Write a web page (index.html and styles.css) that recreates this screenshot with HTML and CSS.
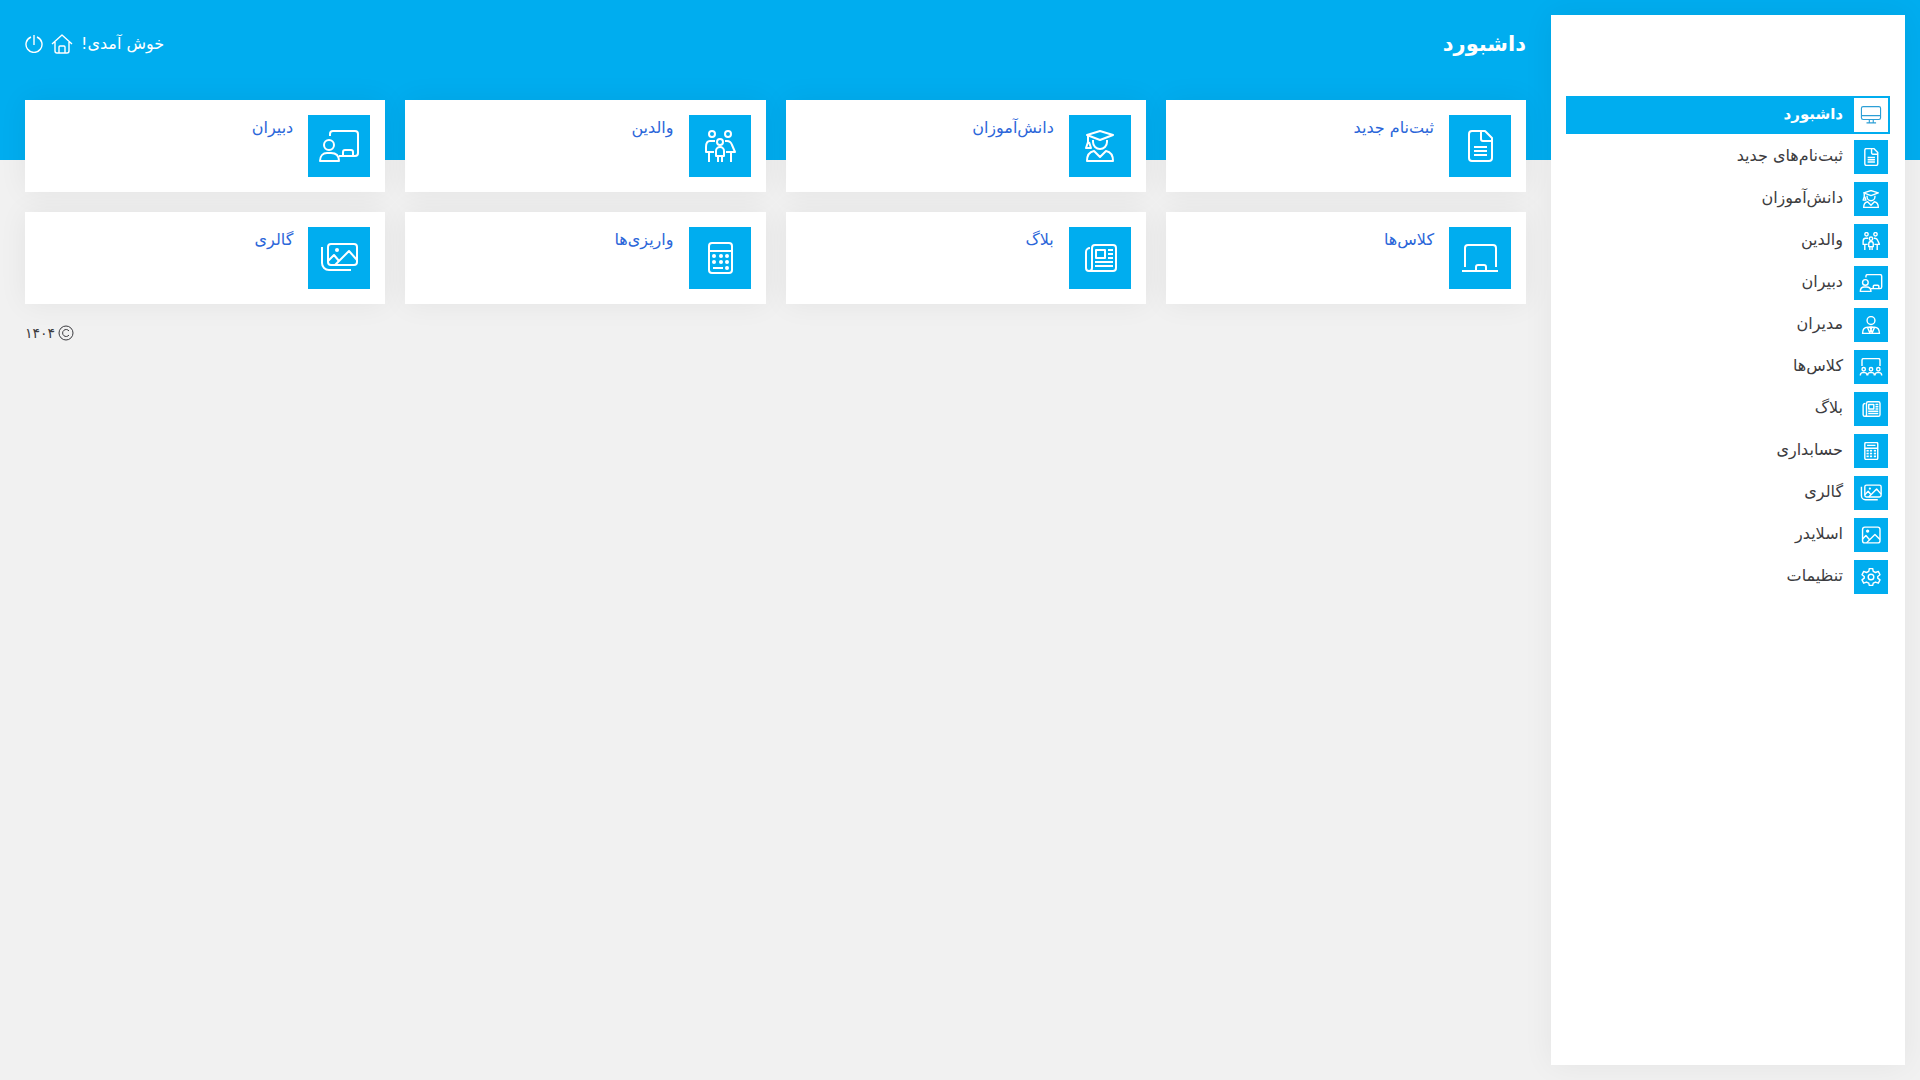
FILE: index.html
```html
<!DOCTYPE html>
<html lang="fa" dir="rtl">
<head>
    <meta charset="UTF-8">
    <meta name="viewport" content="width=device-width, initial-scale=1.0">
    <title>داشبورد</title>
    <link rel="stylesheet" href="styles.css">
</head>
<body>
    <!-- Icon sprite -->
    <svg class="sprite" aria-hidden="true">
        <symbol id="i-monitor" viewBox="0 0 40 32">
            <rect x="3" y="1" width="34" height="23" rx="3"/>
            <path d="M3 17h34M17 24v6M24 24v6M12 30h17"/>
        </symbol>
        <symbol id="i-file" viewBox="0 0 40 32">
            <path d="M12 1h13l7 7v20a3 3 0 0 1-3 3H12a3 3 0 0 1-3-3V4a3 3 0 0 1 3-3z"/>
            <path d="M21 1v8a2 2 0 0 0 2 2h9M14 17h13M14 21h13M14 25h13"/>
        </symbol>
        <symbol id="i-student" viewBox="0 0 40 32">
            <path d="M7 5l13-4 13 4-13 5z"/>
            <path d="M8 6v6l-2 6h5l-2-6M13 10v2a7 7 0 0 0 14 0v-2"/>
            <path d="M7 31c0-6 2-9 7-10l6 6 6-6c5 1 7 4 7 10z"/>
        </symbol>
        <symbol id="i-family" viewBox="0 0 40 32">
            <circle cx="12" cy="4" r="3"/>
            <circle cx="28" cy="4" r="3"/>
            <circle cx="20" cy="12" r="3"/>
            <path d="M15 11h-5c-3 0-4 3-4 6v5h3v10M9 22h5M25 11h2c3 0 4 1 5 4l3 7h-4v10M31 22h-5"/>
            <path d="M18 32v-6h-2v-5a4 4 0 0 1 8 0v5h-2v6M16 26h8"/>
        </symbol>
        <symbol id="i-teacher" viewBox="0 0 40 32">
            <path d="M11 6V4a3 3 0 0 1 3-3h22a3 3 0 0 1 3 3v19a3 3 0 0 1-3 3H20"/>
            <path d="M24 26v-4a2 2 0 0 1 2-2h6a2 2 0 0 1 2 2v4"/>
            <circle cx="10" cy="15" r="5"/>
            <path d="M1 31c0-5 3-8 7-8h4c5 0 8 3 8 8z"/>
        </symbol>
        <symbol id="i-admin" viewBox="0 0 40 32">
            <circle cx="20" cy="8" r="7"/>
            <path d="M5 31c0-6 3-11 9-11h12c6 0 9 5 9 11z"/>
            <path d="M14 21l4 9 2-6 2 6 4-9M18 20h4l-2 4z"/>
        </symbol>
        <symbol id="i-classroom" viewBox="0 0 40 32">
            <path d="M4 14V4a3 3 0 0 1 3-3h26a3 3 0 0 1 3 3v10"/>
            <circle cx="7" cy="20" r="3"/>
            <circle cx="20" cy="20" r="3"/>
            <circle cx="33" cy="20" r="3"/>
            <path d="M1 31c0-3 2-5 4-5h4c2 0 4 2 4 5M14 31c0-3 2-5 4-5h4c2 0 4 2 4 5M27 31c0-3 2-5 4-5h4c2 0 4 2 4 5"/>
        </symbol>
        <symbol id="i-board" viewBox="0 0 40 32">
            <path d="M5 25V6a3 3 0 0 1 3-3h25a3 3 0 0 1 3 3v19M2 29h36"/>
            <path d="M16 29v-4a2 2 0 0 1 2-2h6a2 2 0 0 1 2 2v4"/>
        </symbol>
        <symbol id="i-news" viewBox="0 0 40 32">
            <path d="M10 6a4 4 0 0 0-4 4v16a3 3 0 0 0 6 0V6a3 3 0 0 1 3-3h18a3 3 0 0 1 3 3v20a3 3 0 0 1-3 3H9"/>
            <rect x="16" y="8" width="9" height="8"/>
            <path d="M28 8h5M28 12h5M28 16h5M15 20h18M15 24h18"/>
        </symbol>
        <symbol id="i-calc" viewBox="0 0 40 32">
            <rect x="9" y="1" width="23" height="30" rx="3"/>
            <path d="M9 9h23M13 26h10"/>
            <g class="dots">
                <circle cx="14" cy="14" r="2"/>
                <circle cx="21" cy="14" r="2"/>
                <circle cx="27" cy="14" r="2"/>
                <circle cx="14" cy="20" r="2"/>
                <circle cx="21" cy="20" r="2"/>
                <circle cx="27" cy="20" r="2"/>
                <circle cx="27" cy="26" r="2"/>
            </g>
        </symbol>
        <symbol id="i-accounting" viewBox="0 0 40 32">
            <rect x="9" y="1" width="23" height="30" rx="2"/>
            <path d="M13 6h15M9 11h23"/>
            <g class="dots">
                <rect x="12" y="14" width="4" height="3"/>
                <rect x="18" y="14" width="4" height="3"/>
                <rect x="25" y="14" width="4" height="3"/>
                <rect x="12" y="19" width="4" height="3"/>
                <rect x="18" y="19" width="4" height="3"/>
                <rect x="25" y="19" width="4" height="3"/>
                <rect x="12" y="24" width="4" height="3"/>
                <rect x="18" y="24" width="4" height="3"/>
                <rect x="25" y="24" width="4" height="3"/>
            </g>
        </symbol>
        <symbol id="i-images" viewBox="0 0 40 32">
            <rect x="9" y="2" width="29" height="21" rx="3"/>
            <path d="M3 5v16a7 7 0 0 0 7 7h22M9 19l6-6 5 6M16 23l14-14 8 9"/>
            <circle class="dots" cx="18" cy="8" r="2"/>
        </symbol>
        <symbol id="i-image" viewBox="0 0 40 32">
            <rect x="5" y="2" width="31" height="28" rx="4"/>
            <path d="M5 23l6-6 6 7M12 30l15-15 9 9"/>
            <circle class="dots" cx="14" cy="9" r="3"/>
        </symbol>
        <symbol id="i-gear" viewBox="0 0 40 32">
            <path d="M17 1h6l1 5 4 2 5-2 3 6-4 3v3l4 3-3 6-5-2-4 2-1 4h-6l-1-4-4-2-5 2-3-6 4-3v-3l-4-3 3-6 5 2 4-2z"/>
            <circle cx="20" cy="16" r="5"/>
        </symbol>
        <symbol id="i-home" viewBox="0 0 22 20">
            <path d="M1 10l10-9 10 9M4 8v9a2 2 0 0 0 2 2h10a2 2 0 0 0 2-2V8M8 19v-6a1 1 0 0 1 1-1h4a1 1 0 0 1 1 1v6"/>
        </symbol>
        <symbol id="i-power" viewBox="0 0 18 18">
            <path d="M9 0v10M6 2a8 8 0 1 0 6 0"/>
        </symbol>
        <symbol id="i-copyright" viewBox="0 0 16 16">
            <circle cx="8" cy="8" r="7"/>
            <path d="M11 6a3.500 3.500 0 1 0 0 4"/>
        </symbol>
    </svg>

    <div class="layout">
        <aside class="sidebar">
            <nav class="menu">
                <a href="#" class="menu-item active"><span class="menu-icon"><svg><use href="#i-monitor"/></svg></span>داشبورد</a>
                <a href="#" class="menu-item"><span class="menu-icon"><svg><use href="#i-file"/></svg></span>ثبت‌نام‌های جدید</a>
                <a href="#" class="menu-item"><span class="menu-icon"><svg><use href="#i-student"/></svg></span>دانش‌آموزان</a>
                <a href="#" class="menu-item"><span class="menu-icon"><svg><use href="#i-family"/></svg></span>والدین</a>
                <a href="#" class="menu-item"><span class="menu-icon"><svg><use href="#i-teacher"/></svg></span>دبیران</a>
                <a href="#" class="menu-item"><span class="menu-icon"><svg><use href="#i-admin"/></svg></span>مدیران</a>
                <a href="#" class="menu-item"><span class="menu-icon"><svg><use href="#i-classroom"/></svg></span>کلاس‌ها</a>
                <a href="#" class="menu-item"><span class="menu-icon"><svg><use href="#i-news"/></svg></span>بلاگ</a>
                <a href="#" class="menu-item"><span class="menu-icon"><svg><use href="#i-accounting"/></svg></span>حسابداری</a>
                <a href="#" class="menu-item"><span class="menu-icon"><svg><use href="#i-images"/></svg></span>گالری</a>
                <a href="#" class="menu-item"><span class="menu-icon"><svg><use href="#i-image"/></svg></span>اسلایدر</a>
                <a href="#" class="menu-item"><span class="menu-icon"><svg><use href="#i-gear"/></svg></span>تنظیمات</a>
            </nav>
        </aside>

        <main class="content">
            <header class="topbar">
                <h1>داشبورد</h1>
                <div class="user">
                    <span>خوش آمدی!</span>
                    <a href="#" aria-label="خانه"><svg class="home"><use href="#i-home"/></svg></a>
                    <a href="#" aria-label="خروج"><svg class="power"><use href="#i-power"/></svg></a>
                </div>
            </header>

            <div class="cards">
                <a href="#" class="card"><span class="card-icon"><svg><use href="#i-file"/></svg></span>ثبت‌نام جدید</a>
                <a href="#" class="card"><span class="card-icon"><svg><use href="#i-student"/></svg></span>دانش‌آموزان</a>
                <a href="#" class="card"><span class="card-icon"><svg><use href="#i-family"/></svg></span>والدین</a>
                <a href="#" class="card"><span class="card-icon"><svg><use href="#i-teacher"/></svg></span>دبیران</a>
                <a href="#" class="card"><span class="card-icon"><svg><use href="#i-board"/></svg></span>کلاس‌ها</a>
                <a href="#" class="card"><span class="card-icon"><svg><use href="#i-news"/></svg></span>بلاگ</a>
                <a href="#" class="card"><span class="card-icon"><svg><use href="#i-calc"/></svg></span>واریزی‌ها</a>
                <a href="#" class="card"><span class="card-icon"><svg><use href="#i-images"/></svg></span>گالری</a>
            </div>

            <footer class="footer">
                <svg><use href="#i-copyright"/></svg>
                <span>۱۴۰۴</span>
            </footer>
        </main>
    </div>
</body>
</html>
```
FILE: styles.css
```css
* {
    box-sizing: border-box;
}

body {
    margin: 0;
    font-family: 'DejaVu Sans', sans-serif;
    font-size: 16px;
    line-height: 26px;
    color: #3c3c40;
    background: #f1f1f1 linear-gradient(#00adef, #00adef) no-repeat top / 100% 160px;
}

a {
    color: inherit;
    text-decoration: none;
}

svg {
    display: block;
    fill: none;
    stroke: currentColor;
    stroke-width: 2;
    stroke-linejoin: round;
}

.sprite {
    display: none;
}

.dots {
    fill: currentColor;
    stroke: none;
}

.layout {
    display: flex;
    min-height: 100vh;
    padding: 15px;
}

/* Sidebar */
.sidebar {
    flex: 0 0 calc(20vw - 30px);
    padding: 81px 15px 15px;
    background-color: #fff;
    box-shadow: 0 0 30px rgba(0, 20, 30, 0.06);
}

.menu {
    display: flex;
    flex-direction: column;
    gap: 4px;
}

.menu-item {
    display: flex;
    gap: 11px;
    padding: 2px;
    line-height: 32px;
}

.menu-icon {
    display: flex;
    align-items: center;
    justify-content: center;
    width: 34px;
    height: 34px;
    color: #fff;
    background-color: #00adef;
}

.menu-icon svg {
    width: 24px;
    height: 18px;
    stroke-width: 2.5;
}

.menu-item.active {
    font-size: 15px;
    font-weight: bold;
    color: #fff;
    background-color: #00adef;
}

.active .menu-icon {
    color: #2c9fd6;
    background-color: #fff;
}

.active .menu-icon svg {
    stroke-width: 2;
}

/* Content */
.content {
    flex: 1;
    padding: 0 25px 0 10px;
}

.topbar {
    display: flex;
    align-items: center;
    justify-content: space-between;
    height: 57px;
    margin-bottom: 28px;
    color: #fff;
}

.topbar h1 {
    margin: 0;
    font-size: 21px;
    line-height: 32px;
}

.user {
    display: flex;
    align-items: center;
    gap: 8px;
}

.home {
    width: 22px;
    height: 20px;
    stroke-width: 1.4;
}

.power {
    width: 18px;
    height: 18px;
    stroke-width: 1.4;
}

.cards {
    display: grid;
    grid-template-columns: repeat(4, 1fr);
    gap: 20px;
}

.card {
    display: flex;
    gap: 15px;
    padding: 15px;
    color: #2b66d9;
    background-color: #fff;
    box-shadow: 0 0 30px rgba(0, 20, 30, 0.06);
}

.card-icon {
    display: flex;
    align-items: center;
    justify-content: center;
    width: 62px;
    height: 62px;
    color: #fff;
    background-color: #00adef;
}

.card-icon svg {
    width: 40px;
    height: 32px;
}

.footer {
    display: flex;
    align-items: center;
    justify-content: flex-end;
    gap: 3px;
    margin-top: 16px;
    font-size: 14px;
}

.footer svg {
    width: 16px;
    height: 16px;
    stroke-width: 1;
}
```
